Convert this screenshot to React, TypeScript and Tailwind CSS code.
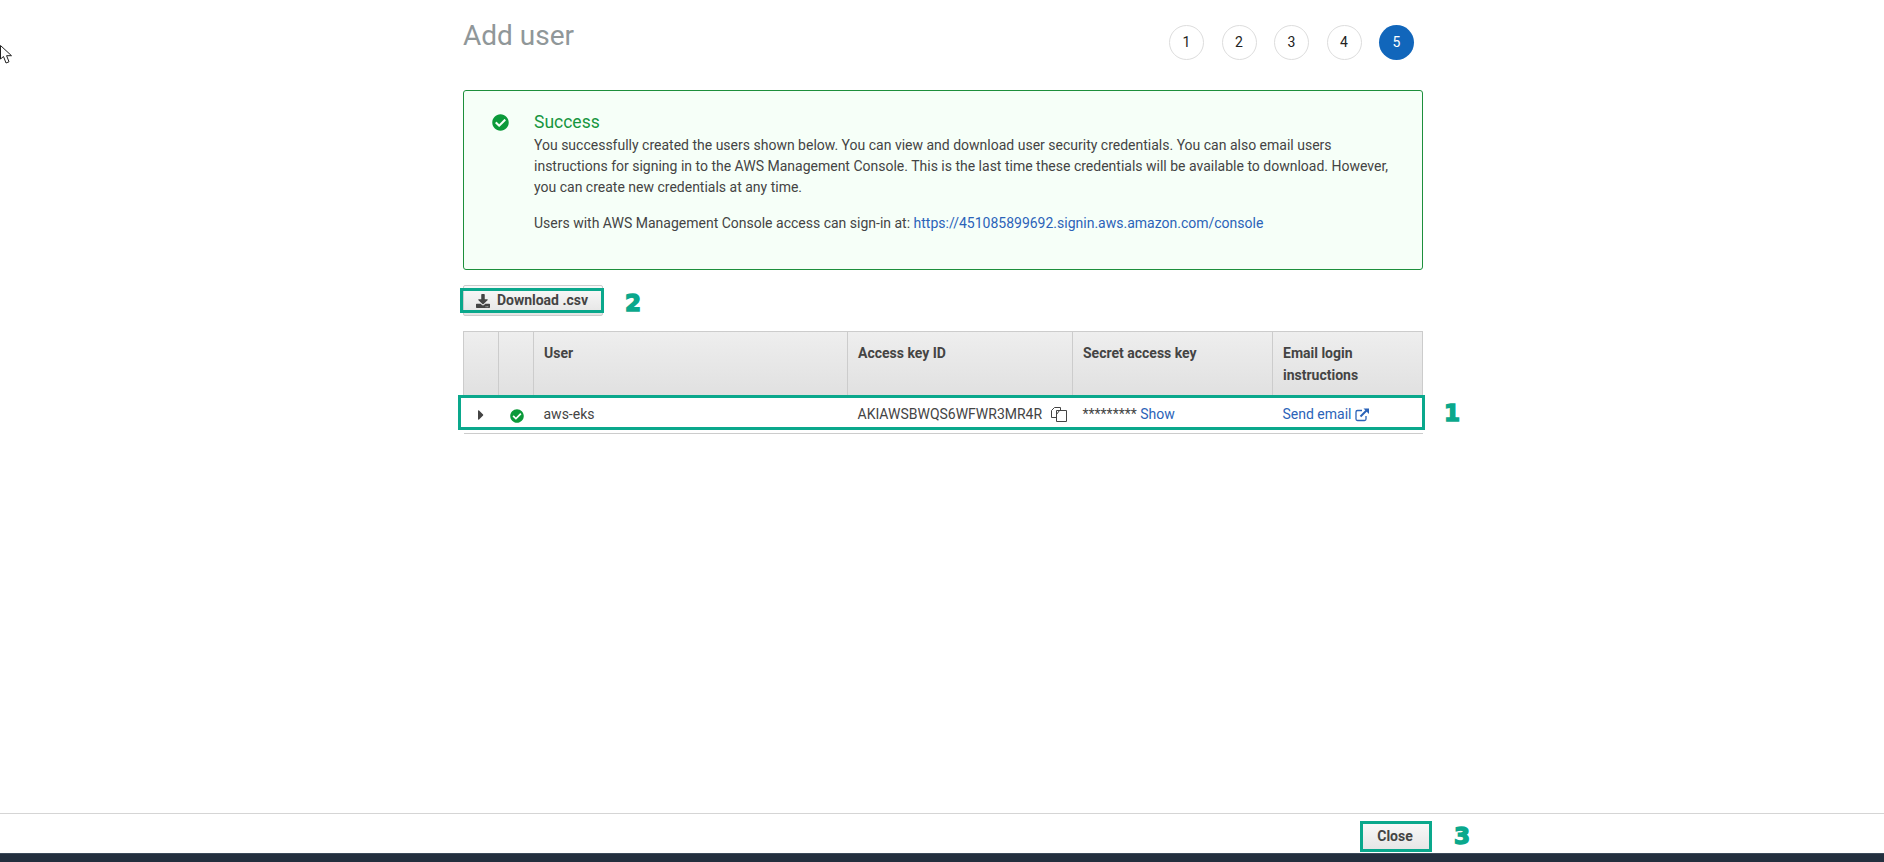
import React from "react";
import { FaCheckCircle, FaCaretRight, FaDownload } from "react-icons/fa";

const steps = ["1", "2", "3", "4", "5"];

function Digit({ children, className }: { children: React.ReactNode; className?: string }) {
  return (
    <span
      className={`font-['DejaVu_Sans',sans-serif] text-[23px] leading-none font-bold text-[#0aa88c] [-webkit-text-stroke:1.5px_#0aa88c] ${className ?? ""}`}
    >
      {children}
    </span>
  );
}

function CopyIcon() {
  return (
    <svg viewBox="0 0 16 16" className="h-4 w-4 shrink-0 text-[#444]" fill="none" stroke="currentColor" strokeWidth="1">
      <path d="M5.5 11.5H.5V4.5L3.5 1.5H9.5V4.5" />
      <path d="M5.5 4.5H15.5V15.5H5.5Z" fill="#fff" />
      <path d="M5.5 8.5L8.5 4.5" />
    </svg>
  );
}

function ExternalIcon() {
  return (
    <svg viewBox="0 0 15 15" className="h-[15px] w-[15px] shrink-0" fill="none" stroke="currentColor">
      <path d="M7 3.5H2.5A1.5 1.5 0 0 0 1 5V12A1.5 1.5 0 0 0 2.5 13.5H9.5A1.5 1.5 0 0 0 11 12V9" strokeWidth="1.3" />
      <path d="M5.5 9.5L12.5 2.5" strokeWidth="2" />
      <path d="M8.5 1.5H14V7Z" fill="currentColor" stroke="none" />
    </svg>
  );
}

export default function App() {
  return (
    <div className="relative flex h-screen flex-col bg-white font-['Roboto',sans-serif] text-sm leading-[21px] text-[#444]">
      {/* cursor from the capture */}
      <svg viewBox="0 0 13 20" className="absolute left-0 top-[45px] h-5 w-[13px]" fill="#fff" stroke="#222" strokeWidth="1">
        <path d="M.5.5V14L3.5 11.5 6 18l3-1.2L6.6 10.7H11.5Z" />
      </svg>

      <main className="flex-1">
        <div className="ml-[463px] w-[960px]">
          <div className="flex h-[90px] items-start justify-between pr-[9px]">
            <h1 className="pt-[18px] text-[28px] leading-[36px] font-normal text-[#909799]">Add user</h1>
            <div className="flex gap-[17.5px] pt-[25px]">
              {steps.map((step) => (
                <div
                  key={step}
                  className={
                    step === "5"
                      ? "flex h-[35px] w-[35px] items-center justify-center rounded-full bg-[#1166bb] text-white"
                      : "flex h-[35px] w-[35px] items-center justify-center rounded-full border border-[#dddddd] text-[#222]"
                  }
                >
                  {step}
                </div>
              ))}
            </div>
          </div>

          <div className="flex h-[180px] rounded-[3px] border border-[#1d8f3c] bg-[#f6fff8] pl-[28px] pt-[21px]">
            <FaCheckCircle className="mt-[2px] h-[17px] w-[17px] shrink-0 text-[#0b9a3a]" />
            <div className="ml-[25px] w-[860px]">
              <div className="text-[17.5px] leading-[21px] text-[#16963f]">Success</div>
              <p className="mt-[2px]">
                You successfully created the users shown below. You can view and download user security credentials. You can also email users
                instructions for signing in to the AWS Management Console. This is the last time these credentials will be available to download. However,
                you can create new credentials at any time.
              </p>
              <p className="mt-[15px]">
                Users with AWS Management Console access can sign-in at:{" "}
                <a className="text-[#2b63b8]">https://451085899692.signin.aws.amazon.com/console</a>
              </p>
            </div>
          </div>

          <div className="mt-[15px] flex items-center gap-[22px]">
            <button className="relative flex h-[31px] w-[140px] items-center justify-center gap-[7px] rounded-[2px] border border-[#cccccc] bg-gradient-to-b from-[#fafafa] to-[#e4e4e4] pr-[2px] font-bold text-[#444]">
              <FaDownload className="h-[14px] w-[14px]" />
              Download .csv
              <span className="absolute -left-[4px] -right-[2px] top-[2px] bottom-[2px] border-3 border-[#0aa88c]"></span>
            </button>
            <Digit className="pt-[5px]">2</Digit>
          </div>

          <div className="relative mt-[15px]">
            <table className="w-full table-fixed border-collapse text-left">
              <thead>
                <tr className="bg-gradient-to-b from-[#eeeeee] to-[#e0e0e0] align-top font-bold">
                  <th className="w-[35px] border border-[#cccccc]"></th>
                  <th className="w-[35px] border border-[#cccccc]"></th>
                  <th className="w-[314px] border border-[#cccccc] px-[10px] py-[11px]">User</th>
                  <th className="w-[225px] border border-[#cccccc] px-[10px] py-[11px]">Access key ID</th>
                  <th className="w-[200px] border border-[#cccccc] px-[10px] py-[11px]">Secret access key</th>
                  <th className="border border-[#cccccc] px-[10px] pt-[10px] pb-[11px] leading-[22px]">Email login instructions</th>
                </tr>
              </thead>
              <tbody>
                <tr className="h-[36px] border-b border-[#cccccc]">
                  <td className="pb-[1px]">
                    <FaCaretRight className="mx-auto h-[16px] w-[16px] text-[#444]" />
                  </td>
                  <td className="pl-[2px]">
                    <FaCheckCircle className="mx-auto h-[14px] w-[14px] text-[#0b9a3a]" />
                  </td>
                  <td className="px-[10px] pb-[3px]">aws-eks</td>
                  <td className="px-[10px] pb-[3px]">
                    <span className="flex items-center gap-[9px] whitespace-nowrap">
                      AKIAWSBWQS6WFWR3MR4R
                      <CopyIcon />
                    </span>
                  </td>
                  <td className="px-[10px] pb-[3px]">
                    ********* <a className="text-[#2b63b8]">Show</a>
                  </td>
                  <td className="px-[10px] pb-[3px]">
                    <a className="flex items-center gap-[4px] text-[#2b63b8]">
                      Send email
                      <ExternalIcon />
                    </a>
                  </td>
                </tr>
              </tbody>
            </table>
            <span className="absolute -left-[5px] -right-[2px] top-[64px] h-[35px] border-3 border-[#0aa88c]"></span>
            <Digit className="absolute right-[-37px] top-[71px]">1</Digit>
          </div>
        </div>
      </main>

      <footer className="flex h-[40px] items-center justify-end gap-[22px] border-t border-[#d5d5d5] pt-[5px] pr-[414px]">
        <button className="h-[31px] w-[72px] border-r-2 border-[#aaaaaa] bg-gradient-to-b from-[#fafafa] to-[#e4e4e4] font-bold text-[#444] outline-3 -outline-offset-3 outline-[#0aa88c]">
          Close
        </button>
        <Digit>3</Digit>
      </footer>
      <div className="h-[9px] border-t border-[#3c4a5a] bg-[#232f3e]"></div>
    </div>
  );
}
